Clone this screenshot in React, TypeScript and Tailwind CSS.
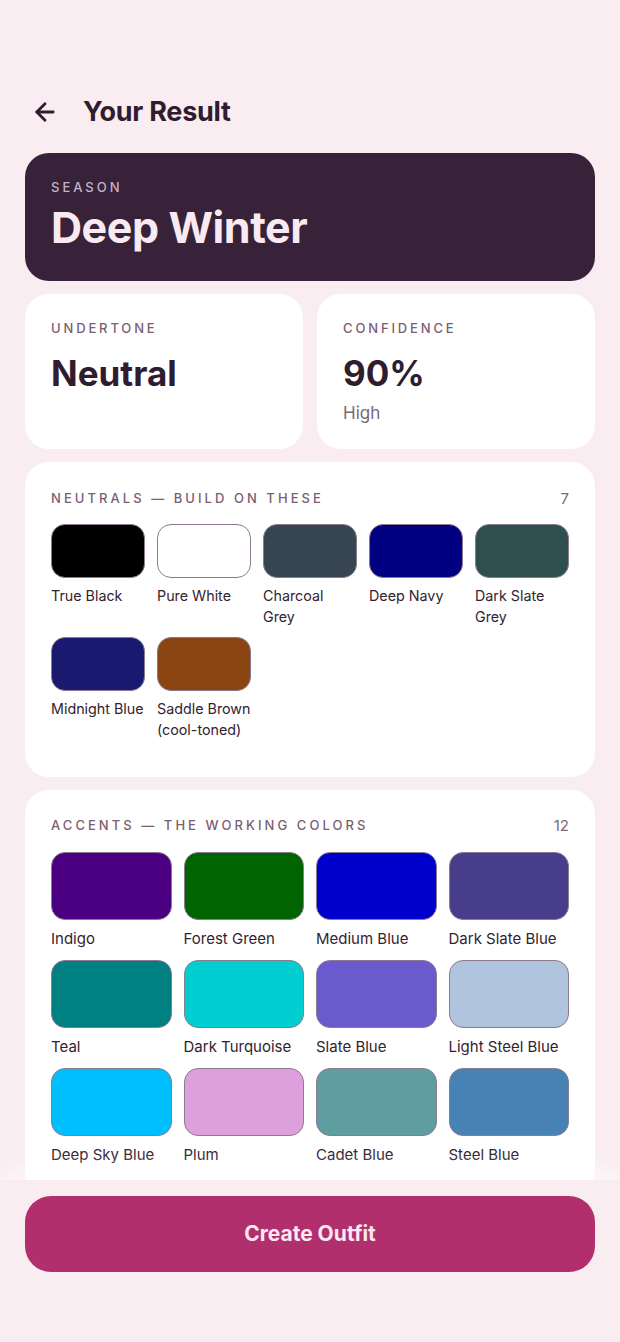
import React from "react";
import { ArrowLeft } from "lucide-react";

type Sw = { name: string; color: string };

const neutrals: Sw[] = [
  { name: "True Black", color: "#000000" },
  { name: "Pure White", color: "#ffffff" },
  { name: "Charcoal Grey", color: "#36454f" },
  { name: "Deep Navy", color: "#000080" },
  { name: "Dark Slate Grey", color: "#2f4f4f" },
  { name: "Midnight Blue", color: "#191970" },
  { name: "Saddle Brown (cool-toned)", color: "#8b4513" },
];

const accents: Sw[] = [
  { name: "Indigo", color: "#4b0082" },
  { name: "Forest Green", color: "#006400" },
  { name: "Medium Blue", color: "#0000cd" },
  { name: "Dark Slate Blue", color: "#483d8b" },
  { name: "Teal", color: "#008080" },
  { name: "Dark Turquoise", color: "#00ced1" },
  { name: "Slate Blue", color: "#6a5acd" },
  { name: "Light Steel Blue", color: "#b0c4de" },
  { name: "Deep Sky Blue", color: "#00bfff" },
  { name: "Plum", color: "#dda0dd" },
  { name: "Cadet Blue", color: "#5f9ea0" },
  { name: "Steel Blue", color: "#4682b4" },
];

const heading = { fontFamily: "Inter, 'Noto Sans', sans-serif" };

function SectionHeader({ title, count }: { title: string; count: number }) {
  return (
    <div className="flex items-center justify-between h-[20px]">
      <span className="text-[13px] font-medium tracking-[0.235em] text-[#7b5d72] uppercase">{title}</span>
      <span className="text-[15px] text-[#7b6a76]">{count}</span>
    </div>
  );
}

function Swatch({ s, h, text, mt }: { s: Sw; h: string; text: string; mt: string }) {
  return (
    <div className="flex flex-col">
      <div
        className={`${h} w-full rounded-[14px] border border-[#8c7a8e]`}
        style={{ backgroundColor: s.color }}
      />
      <div className={`${mt} ${text} leading-[21px] text-[#33232f]`}>{s.name}</div>
    </div>
  );
}

export default function App() {
  return (
    <div
      className="h-[1342px] w-full overflow-hidden flex flex-col bg-[#f9edf1]"
      style={{ fontFamily: "Inter, 'Noto Sans', sans-serif" }}
    >
      <div className="flex-1 overflow-hidden px-[25px] pt-[92px]">
        <div className="flex items-center h-[40px] gap-[24px] pl-[6px]">
          <ArrowLeft size={28} strokeWidth={2.4} className="text-[#2f1c2e]" />
          <h1 className="text-[27px] font-bold tracking-[-0.01em] text-[#2f1c2e]" style={heading}>
            Your Result
          </h1>
        </div>

        <div className="mt-[21px] h-[128px] rounded-[24px] bg-[#37223a] px-[26px] pt-[24px]">
          <div className="text-[13px] leading-[20px] font-medium tracking-[0.23em] text-[#c6b2c6]">SEASON</div>
          <div
            className="mt-[4px] text-[43px] leading-[52px] font-bold tracking-[-0.01em] text-[#f9e9f0]"
            style={heading}
          >
            Deep Winter
          </div>
        </div>

        <div className="mt-[13px] grid grid-cols-2 gap-[14px]">
          <div className="h-[155px] rounded-[24px] bg-white px-[26px] pt-[24px]">
            <div className="text-[13px] leading-[20px] font-medium tracking-[0.22em] text-[#7b5d72]">UNDERTONE</div>
            <div className="mt-[13px] text-[35px] leading-[44px] font-bold text-[#2f1c2e]" style={heading}>
              Neutral
            </div>
          </div>
          <div className="h-[155px] rounded-[24px] bg-white px-[26px] pt-[24px]">
            <div className="text-[13px] leading-[20px] font-medium tracking-[0.22em] text-[#7b5d72]">CONFIDENCE</div>
            <div className="mt-[13px] text-[35px] leading-[44px] font-bold text-[#2f1c2e]" style={heading}>
              90%
            </div>
            <div className="mt-[6px] text-[17px] leading-[24px] text-[#7b6a76]">High</div>
          </div>
        </div>

        <div className="mt-[13px] rounded-[24px] bg-white px-[26px] pt-[27px] pb-[37px]">
          <SectionHeader title="Neutrals — Build on these" count={7} />
          <div className="mt-[15px] grid grid-cols-5 gap-x-[12px] gap-y-[10px]">
            {neutrals.map((s) => (
              <Swatch key={s.name} s={s} h="h-[54px]" text="text-[14.3px]" mt="mt-[7px]" />
            ))}
          </div>
        </div>

        <div className="mt-[13px] rounded-[24px] bg-white px-[26px] pt-[26px] pb-[32px]">
          <SectionHeader title="Accents — The working colors" count={12} />
          <div className="mt-[16px] grid grid-cols-4 gap-x-[12px] gap-y-[11px]">
            {accents.map((s) => (
              <Swatch key={s.name} s={s} h="h-[68px]" text="text-[15px]" mt="mt-[8px]" />
            ))}
          </div>
        </div>
      </div>

      <div className="relative h-[162px] shrink-0 bg-[#f9edf1] px-[25px] pt-[16px] shadow-[0_-10px_20px_rgba(255,255,255,0.6)]">
        <button
          className="h-[76px] w-full rounded-[26px] bg-[#b12f6c] text-[21px] font-bold text-[#fbe8f1]"
          style={heading}
        >
          Create Outfit
        </button>
      </div>
    </div>
  );
}
